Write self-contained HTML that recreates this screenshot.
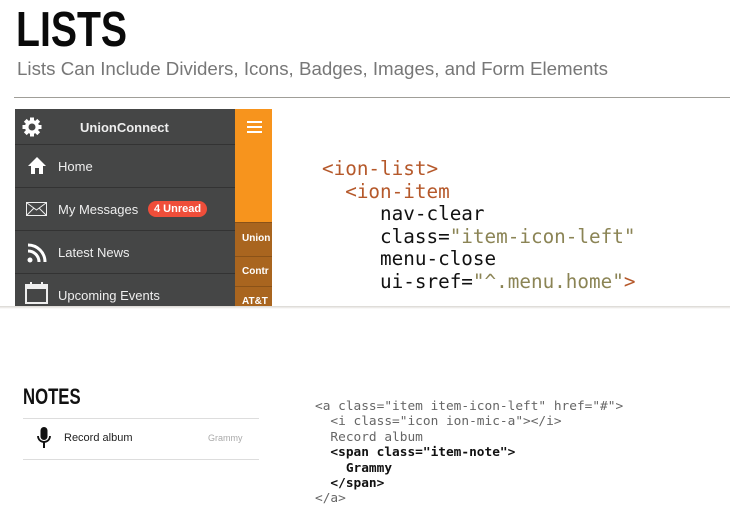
<!DOCTYPE html>
<html><head><meta charset="utf-8"><style>
*{margin:0;padding:0;box-sizing:border-box}
body{width:730px;height:518px;background:#fff;position:relative;overflow:hidden;font-family:"Liberation Sans",sans-serif}
.a{position:absolute}
.cond{font-family:"Liberation Sans",sans-serif;font-weight:bold}
.mono{font-family:"DejaVu Sans Mono","Liberation Mono",monospace;white-space:pre}
.row{position:absolute;left:15px;width:220px;height:43px;border-top:1px solid #333;color:#eee;font-size:13px}
.row span.t{position:absolute;left:43px;top:14px}
.side{position:absolute;left:235px;width:37px;background:#a9651f;border-top:1px solid #8a5218;color:#fff;font-size:10px;font-weight:bold;overflow:hidden;white-space:nowrap;padding-left:7px}
</style></head><body>
<div class="a cond" style="left:16px;top:2px;font-size:49px;line-height:56px;transform:scaleX(0.8);transform-origin:left;color:#0a0a0a">LISTS</div>
<div class="a" style="left:17px;top:59px;font-size:18px;color:#777;white-space:nowrap;transform:scaleX(1.04);transform-origin:left">Lists Can Include Dividers, Icons, Badges, Images, and Form Elements</div>
<div class="a" style="left:14px;top:97px;width:716px;height:1px;background:#a09e98"></div>

<div class="a" style="left:15px;top:109px;width:257px;height:197px;background:#454646"></div>
<div class="a" style="left:235px;top:109px;width:37px;height:113px;background:#f7941d"></div>
<div class="a" style="left:247px;top:121px;width:15px;height:2px;background:#fff;box-shadow:0 5px 0 #fff,0 10px 0 #fff"></div>
<div class="side" style="top:222px;height:34px;padding-top:10px">Union</div>
<div class="side" style="top:256px;height:30px;padding-top:9px">Contr</div>
<div class="side" style="top:286px;height:20px;padding-top:9px">AT&amp;T</div>
<svg class="a" style="left:22px;top:117px" width="20" height="20" viewBox="0 0 20 20"><circle cx="10" cy="10" r="7" fill="#fff"/><g fill="#fff"><rect x="8" y="0.5" width="4" height="19"/><rect x="0.5" y="8" width="19" height="4"/><rect x="8" y="0.5" width="4" height="19" transform="rotate(45 10 10)"/><rect x="8" y="0.5" width="4" height="19" transform="rotate(-45 10 10)"/></g><circle cx="10" cy="10" r="3.5" fill="#454646"/></svg>
<div class="a" style="left:80px;top:120px;color:#eee;font-size:13px;font-weight:bold">UnionConnect</div>
<div class="row" style="top:144px"><svg class="a" style="left:12px;top:11px" width="20" height="19" viewBox="0 0 20 19"><path d="M10 1 L19 10 L16 10 L16 18 L12 18 L12 12 L8 12 L8 18 L4 18 L4 10 L1 10Z" fill="#fff"/></svg><span class="t">Home</span></div>
<div class="row" style="top:187px"><svg class="a" style="left:11px;top:14px" width="21" height="14" viewBox="0 0 21 14"><rect x="0.5" y="0.5" width="20" height="13" fill="none" stroke="#eee"/><path d="M1 1 L10.5 8 L20 1 M1 13 L8 6 M20 13 L13 6" stroke="#eee" fill="none"/></svg><span class="t">My Messages</span><span class="a" style="left:133px;top:13px;background:#ef4e3a;color:#fff;font-weight:bold;font-size:11px;border-radius:9px;padding:2px 6px">4 Unread</span></div>
<div class="row" style="top:230px"><svg class="a" style="left:12px;top:12px" width="20" height="20" viewBox="0 0 20 20"><circle cx="3" cy="17" r="2.5" fill="#fff"/><path d="M1 8 A11 11 0 0 1 12 19" stroke="#fff" stroke-width="3" fill="none"/><path d="M1 2 A17 17 0 0 1 18 19" stroke="#fff" stroke-width="3" fill="none"/></svg><span class="t">Latest News</span></div>
<div class="row" style="top:273px;height:33px"><svg class="a" style="left:10px;top:8px" width="23" height="22" viewBox="0 0 23 22"><rect x="1" y="3" width="21" height="18" fill="none" stroke="#eee" stroke-width="2"/><rect x="1" y="3" width="21" height="4" fill="#eee"/><rect x="5" y="0" width="2" height="5" fill="#eee"/><rect x="16" y="0" width="2" height="5" fill="#eee"/></svg><span class="t">Upcoming Events</span></div>
<div class="a" style="left:0;top:306px;width:730px;height:3px;background:linear-gradient(#d8d6d2,#fff)"></div>

<div class="a mono" style="left:322px;top:158px;font-size:19.3px;line-height:22.5px;color:#111"><span style="color:#b5582a">&lt;ion-list&gt;</span>
<span style="color:#b5582a">  &lt;ion-item</span>
     nav-clear
     class=<span style="color:#8b8455">"item-icon-left"</span>
     menu-close
     ui-sref=<span style="color:#8b8455">"^.menu.home"</span><span style="color:#b5582a">&gt;</span></div>

<div class="a cond" style="left:23px;top:384px;font-size:22px;transform:scaleX(0.76);transform-origin:left;color:#111">NOTES</div>
<div class="a" style="left:23px;top:418px;width:236px;height:1px;background:#ddd"></div>
<div class="a" style="left:23px;top:459px;width:236px;height:1px;background:#ddd"></div>
<svg class="a" style="left:37px;top:427px" width="14" height="22" viewBox="0 0 14 22"><rect x="3.5" y="0" width="7" height="13" rx="3.5" fill="#111"/><path d="M1 9 A6 6 0 0 0 13 9" stroke="#111" stroke-width="1.8" fill="none"/><rect x="6" y="14" width="2" height="7" fill="#111"/></svg>
<div class="a" style="left:64px;top:432px;font-size:11px;color:#222">Record album</div>
<div class="a" style="left:208px;top:433px;font-size:9px;color:#aaa">Grammy</div>

<div class="a mono" style="left:315px;top:399px;font-size:12.8px;line-height:15.4px;color:#666">&lt;a class="item item-icon-left" href="#"&gt;
  &lt;i class="icon ion-mic-a"&gt;&lt;/i&gt;
  Record album
<b style="color:#111">  &lt;span class="item-note"&gt;
    Grammy
  &lt;/span&gt;</b>
&lt;/a&gt;</div>
</body></html>
